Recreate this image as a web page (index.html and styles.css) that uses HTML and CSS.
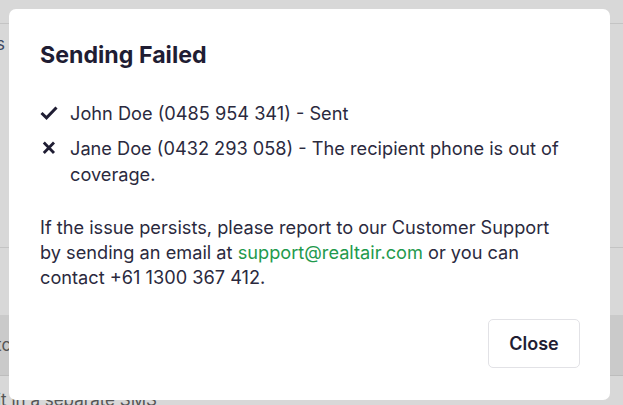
FILE: index.html
```html
<!DOCTYPE html>
<html>
<head>
<meta charset="utf-8">
<link rel="stylesheet" href="styles.css">
</head>
<body>
<div class="backdrop">
  <div class="bg-top"></div>
  <div class="bg-s">s</div>
  <div class="bg-mid"></div>
  <div class="bg-band"><span class="bg-tc">tc</span></div>
  <div class="bg-bottom">it in a separate SMS</div>
</div>
<div class="modal">
  <h1 class="title">Sending Failed</h1>
  <ul class="results">
    <li class="result">
      <svg class="icon" width="18" height="14" viewBox="0 0 18 14"><path d="M1.5 7 L6.5 11.8 L16.5 1.5" fill="none" stroke="#1f1d33" stroke-width="3" stroke-linejoin="miter"/></svg>
      <span>John Doe (0485 954 341) - Sent</span>
    </li>
    <li class="result">
      <svg class="icon" width="18" height="14" viewBox="0 0 18 14"><path d="M3.8 1.5 L14 12 M14 1.5 L3.8 12" fill="none" stroke="#1f1d33" stroke-width="2.8"/></svg>
      <span>Jane Doe (0432 293 058) - The recipient phone is out of coverage.</span>
    </li>
  </ul>
  <p class="note">If the issue persists, please report to our Customer Support by sending an email at <a class="link" href="#">support@realtair.com</a> or you can contact +61 1300 367 412.</p>
  <div class="actions">
    <button class="btn">Close</button>
  </div>
</div>
</body>
</html>
```
FILE: styles.css
```css
html, body {
  margin: 0;
  padding: 0;
  width: 623px;
  height: 405px;
  overflow: hidden;
  background: #d8d8d8;
  font-family: "Inter", "Liberation Sans", sans-serif;
}
.backdrop {
  position: absolute;
  inset: 0;
  display: flex;
  flex-direction: column;
}
.bg-top {
  height: 23px;
  border-bottom: 1px solid #c4c4c4;
  flex: none;
}
.bg-s {
  height: 223px;
  padding-top: 10px;
  box-sizing: border-box;
  font-size: 17px;
  color: #3c4a63;
  flex: none;
  margin-left: -4px;
}
.bg-mid {
  height: 67px;
  border-top: 1px solid #c4c4c4;
  flex: none;
}
.bg-band {
  height: 60px;
  background: #cacaca;
  border-bottom: 1px solid #bdbdbd;
  flex: none;
  font-size: 17px;
  color: #555;
  line-height: 60px;
  margin-left: -4px;
}
.bg-bottom {
  font-size: 17px;
  color: #555;
  padding-top: 14px;
  margin-left: -3px;
}
.modal {
  position: absolute;
  left: 9px;
  top: 9px;
  width: 601px;
  height: 391px;
  box-sizing: border-box;
  background: #fff;
  border-radius: 7px;
  padding: 32px 20px 0 31px;
  color: #1f1d33;
  display: flex;
  flex-direction: column;
}
.title {
  margin: 0;
  font-size: 23.2px;
  font-weight: 700;
  line-height: 28px;
}
.results {
  list-style: none;
  margin: 31px 0 0 0;
  padding: 0;
  display: flex;
  flex-direction: column;
  gap: 9px;
}
.result {
  display: flex;
  align-items: flex-start;
  gap: 12px;
  font-size: 18.2px;
  line-height: 26px;
  color: #2b2a3e;
}
.icon {
  flex: none;
  margin-top: 6px;
}
.note {
  margin: 28px 0 0 0;
  font-size: 18.2px;
  line-height: 25px;
  color: #2b2a3e;
  max-width: 522px;
}
.link {
  color: #1f9a4d;
  text-decoration: none;
}
.actions {
  display: flex;
  justify-content: flex-end;
  margin-top: 29px;
  padding-right: 10px;
}
.btn {
  width: 92px;
  height: 49px;
  background: #fff;
  border: 1px solid #e2e2e6;
  border-radius: 5px;
  font-family: "Inter", "Liberation Sans", sans-serif;
  font-size: 18px;
  font-weight: 600;
  color: #1f1d33;
}
```
